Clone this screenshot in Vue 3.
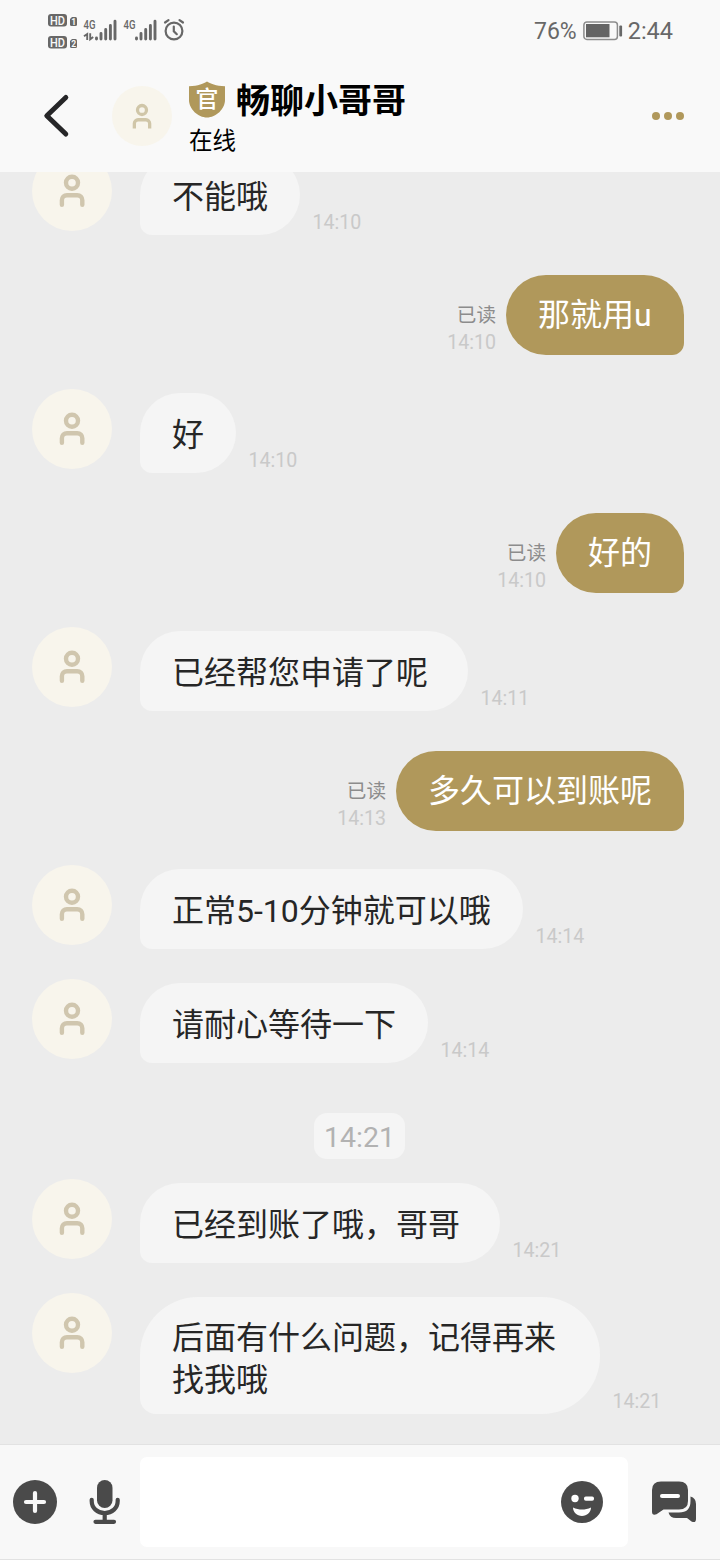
<script setup>
const items = [
  { side: 'left', lines: ['不能哦'], time: '14:10', width: 160 },
  { side: 'right', lines: ['那就用u'], time: '14:10', width: 178 },
  { side: 'left', lines: ['好'], time: '14:10', width: 96 },
  { side: 'right', lines: ['好的'], time: '14:10', width: 128 },
  { side: 'left', lines: ['已经帮您申请了呢'], time: '14:11', width: 328 },
  { side: 'right', lines: ['多久可以到账呢'], time: '14:13', width: 288 },
  { side: 'left', lines: ['正常5-10分钟就可以哦'], time: '14:14', width: 383 },
  { side: 'left', lines: ['请耐心等待一下'], time: '14:14', width: 288 },
  { side: 'divider', time: '14:21' },
  { side: 'left', lines: ['已经到账了哦，哥哥'], time: '14:21', width: 360 },
  { side: 'left', lines: ['后面有什么问题，记得再来', '找我哦'], time: '14:21', width: 460 },
]
</script>

<template>
  <div class="screen">
    <div class="status">
      <svg class="signals" width="140" height="40" viewBox="46 10 140 40">
        <g fill="#686868">
          <rect x="48" y="14" width="19" height="12.500" rx="3" />
          <rect x="48" y="36" width="19" height="12.500" rx="3" />
          <path d="M70 19l2-2h3.500a1.500 1.500 0 0 1 1.500 1.500v6a1.500 1.500 0 0 1-1.500 1.500h-4a1.500 1.500 0 0 1-1.500-1.500z" />
          <path d="M70 41l2-2h3.500a1.500 1.500 0 0 1 1.500 1.500v6a1.500 1.500 0 0 1-1.500 1.500h-4a1.500 1.500 0 0 1-1.500-1.500z" />
        </g>
        <g fill="#f9f9f9" font-family="Roboto, sans-serif" font-weight="500">
          <text x="50" y="24.500" font-size="12.500" textLength="15" lengthAdjust="spacingAndGlyphs">HD</text>
          <text x="50" y="46.500" font-size="12.500" textLength="15" lengthAdjust="spacingAndGlyphs">HD</text>
          <text x="71.200" y="24.700" font-size="8.500" font-weight="700">1</text>
          <text x="71.200" y="46.700" font-size="8.500" font-weight="700">2</text>
        </g>
        <g fill="#686868" font-family="Roboto, sans-serif" font-weight="500" font-size="12.500">
          <text x="83.500" y="29" textLength="12" lengthAdjust="spacingAndGlyphs">4G</text>
          <text x="123.500" y="29" textLength="12" lengthAdjust="spacingAndGlyphs">4G</text>
        </g>
        <g fill="none" stroke="#686868" stroke-width="2.900" stroke-linecap="round">
          <path d="M96.500 38v1M101 33.500v5.500M105.700 29.500v9.500M110.400 25.500v13.500M115 21.300v17.700" />
          <path d="M136.500 38v1M141 33.500v5.500M145.700 29.500v9.500M150.400 25.500v13.500M155 21.300v17.700" />
        </g>
        <path d="M84 36.300l3.200-2.300v6M90.200 33.300v6l3-2.300" fill="none" stroke="#686868" stroke-width="1.900" />
        <g fill="none" stroke="#686868" stroke-width="2.200" stroke-linecap="round">
          <circle cx="174" cy="31" r="8.400" />
          <path d="M173.800 26.500v4.700l3 3M165 22.500l3.500-2.400M183 22.500l-3.500-2.400" />
        </g>
      </svg>
      <div class="power">
        <span class="percent">76%</span>
        <svg width="40" height="20" viewBox="0 0 40 20">
          <rect x="0.900" y="0.900" width="33.500" height="17.500" rx="3" fill="none" stroke="#8d8d8d" stroke-width="1.500" />
          <rect x="3" y="3" width="23.500" height="13.300" fill="#646464" />
          <rect x="36.300" y="4.500" width="2.800" height="11" rx="1" fill="#686868" />
        </svg>
        <span class="clock">2:44</span>
      </div>
    </div>

    <header class="header">
      <svg class="back" width="30" height="46" viewBox="0 0 30 46">
        <path d="M24.800 5.500L5.800 23.700L24.800 42" fill="none" stroke="#262628" stroke-width="5" stroke-linecap="round" stroke-linejoin="round" />
      </svg>
      <svg class="head-avatar" width="60" height="60" viewBox="0 0 80 80">
        <circle cx="40" cy="40" r="40" fill="#f8f5ec" />
        <g fill="none" stroke="#d0c6a8" stroke-width="4.400">
          <circle cx="40" cy="32" r="6" />
          <path d="M29.800 56.500V50a5 5 0 0 1 5-5h10.400a5 5 0 0 1 5 5v6.500" />
        </g>
      </svg>
      <div class="who">
        <div class="title">
          <span class="badge">
            <svg width="36" height="37" viewBox="0 0 36 37">
              <path d="M18 0.500C21 2.500 27 5 36 5.300V19C36 28 27 36.500 18 36.500S0 28 0 19V5.300C9 5 15 2.500 18 0.500Z" fill="#b0985b" />
            </svg>
            <span class="badge-text">官</span>
          </span>
          <b>畅聊小哥哥</b>
        </div>
        <div class="online">在线</div>
      </div>
      <div class="dots"><i></i><i></i><i></i></div>
    </header>

    <main class="chat">
      <template v-for="(m, i) in items" :key="i">
        <div v-if="m.side === 'divider'" class="divider"><span>{{ m.time }}</span></div>
        <div v-else class="row" :class="m.side">
          <svg v-if="m.side === 'left'" class="avatar" width="80" height="80" viewBox="0 0 80 80">
            <circle cx="40" cy="40" r="40" fill="#f8f5ec" />
            <g fill="none" stroke="#d0c6ae" stroke-width="4.400" stroke-linecap="round">
              <circle cx="40" cy="31.700" r="6" />
              <path d="M29.900 53.800V49.200a5 5 0 0 1 5-5h10.400a5 5 0 0 1 5 5v4.600" />
            </g>
          </svg>
          <div v-if="m.side === 'right'" class="meta">
            <span class="read">已读</span>
            <span class="time">{{ m.time }}</span>
          </div>
          <div class="bubble" :class="{ tall: m.lines.length > 1 }" :style="{ width: m.width + 'px' }">
            <div v-for="line in m.lines" :key="line" class="line">{{ line }}</div>
          </div>
          <div v-if="m.side === 'left'" class="meta"><span class="time">{{ m.time }}</span></div>
        </div>
      </template>
    </main>

    <footer class="footer">
      <svg class="plus" width="44" height="44" viewBox="0 0 44 44">
        <circle cx="22" cy="22" r="22" fill="#4a4a4a" />
        <path d="M13 22H31M22 13V31" stroke="#f8f8f8" stroke-width="4.200" stroke-linecap="round" />
      </svg>
      <svg class="mic" width="32" height="44" viewBox="0 0 32 44">
        <rect x="8" y="0" width="15.500" height="28" rx="7.750" fill="#4a4a4a" />
        <path d="M2.700 19.800v1.200c0 7 5.500 12 13 12S28.700 28 28.700 21v-1.200M15.700 33v8M6.500 41.800h18.500" fill="none" stroke="#4a4a4a" stroke-width="4.200" stroke-linecap="round" />
      </svg>
      <div class="input">
        <svg width="42" height="42" viewBox="0 0 42 42">
          <circle cx="21" cy="21" r="21" fill="#4a4a4a" />
          <circle cx="14" cy="17.500" r="3.700" fill="#fff" />
          <rect x="23" y="15.500" width="10" height="4.300" rx="1.800" fill="#fff" />
          <path d="M12 26.500C15 28 18 28.500 21 28.500S27 28 30 26.500C30 31 26 35 21 35S12 31 12 26.500Z" fill="#fff" />
        </svg>
      </div>
      <svg class="talk" width="44" height="42" viewBox="0 0 44 42">
        <path d="M9 0.500H27Q36 0.500 36 9V20Q36 28.500 27 28.500H11.500L4.500 33.300Q0 35 0 30.500V9Q0 0.500 9 0.500Z" fill="#4a4a4a" />
        <path d="M38.500 15.500Q44 17 44 23V38Q44 42.500 39.500 40.500L35 37H24Q18 37 16.500 31.500H27Q38.500 31.500 38.500 20Z" fill="#4a4a4a" />
        <path d="M10 15H26" stroke="#fff" stroke-width="4" stroke-linecap="round" />
      </svg>
    </footer>
  </div>
</template>

<style>
body {
  margin: 0;
}
</style>

<style scoped>
.screen {
  width: 720px;
  height: 1560px;
  display: flex;
  flex-direction: column;
  overflow: hidden;
  background: #ececec;
  font-family: Roboto, "Noto Sans CJK SC", sans-serif;
}
.status {
  height: 60px;
  flex: none;
  display: flex;
  justify-content: space-between;
  box-sizing: border-box;
  padding: 10px 47px 0 46px;
  background: #f9f9f9;
}
.power {
  display: flex;
  height: 42px;
  align-items: center;
  color: #686868;
  font-size: 23.5px;
}
.percent {
  font-size: 23px;
}
.power svg {
  margin: 0 5px 0 6px;
}
.header {
  height: 112px;
  flex: none;
  display: flex;
  align-items: flex-start;
  box-sizing: border-box;
  padding-right: 36px;
  background: #f9f9f9;
}
.back {
  margin: 32px 0 0 41px;
}
.head-avatar {
  margin: 26px 0 0 41px;
}
.who {
  margin: 19px auto 0 17px;
  color: #000;
}
.title {
  display: flex;
  align-items: center;
  height: 40px;
  font-size: 34px;
}
.title b {
  margin-left: 11px;
  padding-top: 4px;
  line-height: 40px;
}
.badge {
  position: relative;
  width: 36px;
  height: 37px;
}
.badge svg {
  display: block;
}
.badge-text {
  position: absolute;
  inset: 0;
  text-align: center;
  color: #fff;
  font-size: 23px;
  font-weight: 500;
  line-height: 37px;
}
.online {
  margin-top: 2px;
  font-size: 23.5px;
  line-height: 40px;
}
.dots {
  display: flex;
  gap: 4px;
  margin-top: 52px;
}
.dots i {
  width: 8px;
  height: 8px;
  border-radius: 50%;
  background: #b0985b;
}
.chat {
  flex: 1;
  min-height: 0;
  display: flex;
  flex-direction: column;
  justify-content: flex-end;
  gap: 30px;
  box-sizing: border-box;
  padding: 0 36px 30px 32px;
  overflow: hidden;
}
.row {
  display: flex;
  flex: none;
  align-items: flex-end;
}
.row.right {
  justify-content: flex-end;
  padding: 10px 0 4px;
}
.avatar {
  align-self: flex-start;
  margin-right: 28px;
}
.bubble {
  flex: none;
  height: 80px;
  box-sizing: border-box;
  padding: 19px 0 0 32px;
  font-size: 32px;
  line-height: 42px;
  white-space: nowrap;
}
.left .bubble {
  margin-top: 4px;
  padding-top: 21px;
  border-radius: 40px 40px 40px 12px;
  background: #f5f5f5;
  color: #262626;
}
.left .bubble.tall {
  height: 117px;
  padding-top: 20px;
  border-radius: 58px 58px 58px 16px;
}
.right .bubble {
  border-radius: 40px 40px 12px 40px;
  background: #b0985b;
  color: #fff;
}
.meta {
  display: flex;
  flex-direction: column;
  margin-bottom: -1px;
  font-size: 19.6px;
  line-height: 27px;
  color: #c9c9c9;
}
.left .meta {
  margin-left: 12.5px;
}
.right .meta {
  align-items: flex-end;
  margin-right: 10px;
}
.read {
  color: #8c8c8c;
}
.divider {
  flex: none;
  display: flex;
  justify-content: center;
  margin: 20px 0 -10px;
}
.divider span {
  width: 91px;
  height: 46px;
  margin-left: 3px;
  border-radius: 13px;
  background: #f5f5f5;
  color: #b2b2b2;
  font-size: 28.5px;
  line-height: 49px;
  text-align: center;
}
.footer {
  height: 116px;
  flex: none;
  display: flex;
  align-items: center;
  box-sizing: border-box;
  border-top: 1px solid #e2e2e2;
  border-bottom: 1px solid #e2e2e2;
  padding: 0 24px 0 13px;
  background: #f8f8f8;
}
.mic {
  margin-left: 32px;
}
.input {
  display: flex;
  align-items: center;
  justify-content: flex-end;
  width: 488px;
  height: 90px;
  box-sizing: border-box;
  margin-left: 19px;
  padding-right: 25px;
  border-radius: 7px;
  background: #fff;
}
.talk {
  margin-left: 24px;
}
</style>
